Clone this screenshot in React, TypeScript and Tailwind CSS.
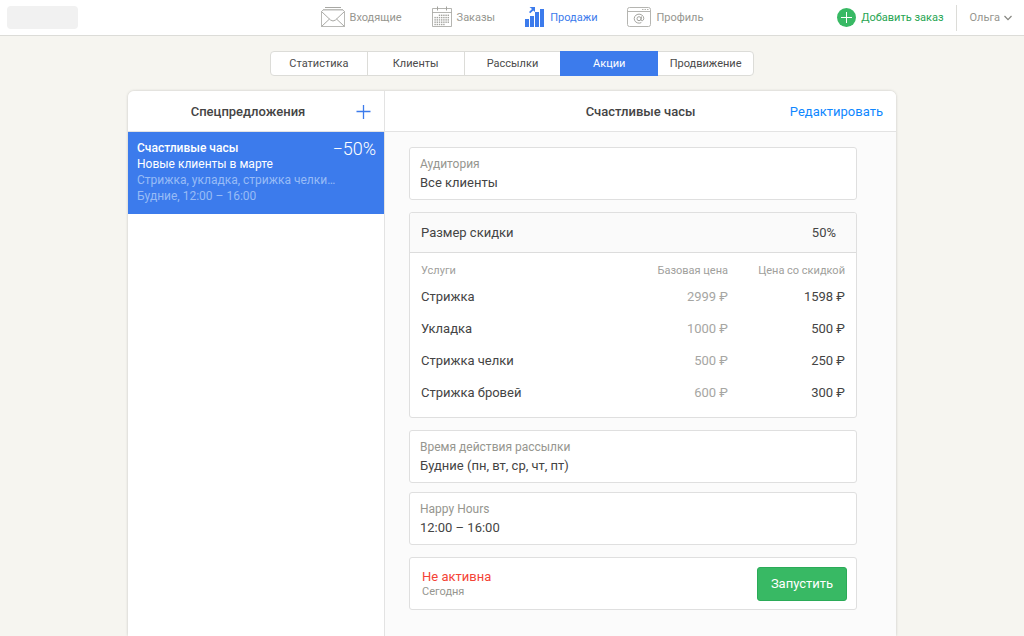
import type { ReactNode } from 'react';

function MailIcon() {
  return (
    <svg width="24" height="24" viewBox="0 0 24 24" fill="none" stroke="#a8a8a4" strokeWidth="1" aria-hidden="true">
      <path d="M4 1.500h16" />
      <path d="M2 3.500h20" strokeOpacity=".6" />
      <path d="M.5 5.500 2 4h20l1.500 1.500v15H.5z" strokeOpacity=".8" />
      <path d="M.5 5.500 9.500 14q2.500 2 5 0l9-8.500M.5 20.500 8.500 13M23.500 20.500 15.500 13" />
    </svg>
  );
}

function CalendarIcon() {
  const dots: ReactNode[] = [];
  for (let row = 0; row < 5; row++) {
    for (let col = 0; col < 7; col++) {
      if (row === 0 && col < 2) continue;
      if (row === 4 && col > 4) continue;
      dots.push(<rect key={`${row}-${col}`} x={2.4 + col * 2.2} y={8.6 + row * 2.3} width="1.4" height="1.4" />);
    }
  }
  return (
    <svg width="20" height="24" viewBox="0 0 20 24" aria-hidden="true">
      <g fill="none" stroke="#a3a39e">
        <path d="M.5 2.500h19v18H.5zM.5 6.500h19" strokeOpacity=".8" />
        <path d="M5.500 .5v4M14.500 .5v4" />
      </g>
      <g fill="#a3a39e">{dots}</g>
    </svg>
  );
}

function SalesIcon() {
  return (
    <svg width="20" height="24" viewBox="0 0 20 24" fill="#3c7bec" aria-hidden="true">
      <path d="M0 13h4v8H0zM5 10h4v11H5zM10 6h4v15h-4zM15 3h4v18h-4z" />
      <path d="M4.500 1H10v5L8.300 4.500 5.200 7.300 4 6 7 3z" />
    </svg>
  );
}

function ProfileIcon() {
  return (
    <svg width="24" height="24" viewBox="0 0 24 24" fill="none" stroke="#b5b5b1" aria-hidden="true">
      <rect x=".5" y="1.500" width="23" height="19" rx="2" />
      <path d="M.5 5.500h23" />
      <path d="M15 3.500h1.500M17.500 3.500H19M20 3.500h1.500" />
      <g stroke="#a3a39e">
        <circle cx="12" cy="12.700" r="2" />
        <path d="M14.500 10.500 14 13.500q0 1.500 1.200 1.300 1.600-.4 1.600-2.600a4.800 4.500 0 1 0-2.500 4.400" />
      </g>
    </svg>
  );
}

const navItems = [
  { label: 'Входящие', icon: <MailIcon />, active: false },
  { label: 'Заказы', icon: <CalendarIcon />, active: false },
  { label: 'Продажи', icon: <SalesIcon />, active: true },
  { label: 'Профиль', icon: <ProfileIcon />, active: false },
];

const tabs = ['Статистика', 'Клиенты', 'Рассылки', 'Акции', 'Продвижение'];

const services = [
  { name: 'Стрижка', base: '2999 ₽', discounted: '1598 ₽' },
  { name: 'Укладка', base: '1000 ₽', discounted: '500 ₽' },
  { name: 'Стрижка челки', base: '500 ₽', discounted: '250 ₽' },
  { name: 'Стрижка бровей', base: '600 ₽', discounted: '300 ₽' },
];

function Header() {
  return (
    <header className="grid h-9 grid-cols-[1fr_auto_1fr] items-center border-b border-[#dcdcd8] bg-white">
      <div className="ml-[7px] h-[23px] w-[71px] rounded bg-[#f1f1f1]" />
      <nav className="flex items-center gap-[30px] text-[11px]">
        {navItems.map((item) => (
          <a
            key={item.label}
            href="#"
            className={`flex items-center gap-[5px] ${item.active ? 'text-[#3c7bec]' : 'text-[#96968f]'}`}
          >
            {item.icon}
            <span className="pt-0.5">{item.label}</span>
          </a>
        ))}
      </nav>
      <div className="flex items-center justify-end pr-3 text-[11px]">
        <button type="button" className="flex items-center gap-[5px] text-[#27a552]">
          <svg width="19" height="19" viewBox="0 0 19 19" aria-hidden="true">
            <circle cx="9.500" cy="9.500" r="9.500" fill="#38b964" />
            <path d="M9.500 4v11M4 9.500h11" stroke="#fff" strokeWidth="1" />
          </svg>
          <span className="pt-0.5">Добавить заказ</span>
        </button>
        <span className="mr-3 ml-[13px] h-[26px] w-px bg-[#dcdcd8]" />
        <button type="button" className="flex items-center gap-1 text-[#96968f]">
          <span className="pt-0.5">Ольга</span>
          <svg width="8" height="6" viewBox="0 0 8 6" fill="none" stroke="#85857f" strokeWidth="1.2" aria-hidden="true">
            <path d="M.5 1 4 4.700 7.500 1" />
          </svg>
        </button>
      </div>
    </header>
  );
}

function Tabs() {
  return (
    <div className="mx-auto mt-[15px] grid h-[25px] w-full max-w-[484px] grid-cols-5 text-[11px] text-[#4b4b4b]">
      {tabs.map((tab) => (
        <button
          key={tab}
          type="button"
          className={`-mr-px border pt-0.5 first:rounded-l last:mr-0 last:rounded-r ${
            tab === 'Акции' ? 'z-1 border-[#3c7bec] bg-[#3c7bec] text-white' : 'border-[#dcdcd8] bg-white'
          }`}
        >
          {tab}
        </button>
      ))}
    </div>
  );
}

function InfoCard({ label, value }: { label: string; value: string }) {
  return (
    <div className="rounded-[3px] border border-[#dfdfdf] bg-white px-2.5 pt-[7px] pb-2">
      <div className="text-[12px] leading-[19px] text-[#96968f]">{label}</div>
      <div className="text-[13px] leading-[17px] text-[#444]">{value}</div>
    </div>
  );
}

function DiscountCard() {
  return (
    <section className="rounded-[3px] border border-[#dfdfdf] bg-white pb-2">
      <div className="flex h-10 items-center justify-between rounded-t-[3px] border-b border-[#dcdcdc] bg-[#fafafa] pr-5 pl-[11px] text-[13px] text-[#444]">
        <h3>Размер скидки</h3>
        <span>50%</span>
      </div>
      <div className="px-[11px]">
        <table className="w-full text-[13px]">
          <thead>
            <tr className="h-7 text-[11px] text-[#a0a09c]">
              <th scope="col" className="pt-2 text-left font-normal">Услуги</th>
              <th scope="col" className="pt-2 text-right font-normal">Базовая цена</th>
              <th scope="col" className="w-[117px] pt-2 text-right font-normal">Цена со скидкой</th>
            </tr>
          </thead>
          <tbody>
            {services.map((service) => (
              <tr key={service.name} className="h-8 text-[#444]">
                <td>{service.name}</td>
                <td className="text-right text-[#a6a6a3]">{service.base}</td>
                <td className="text-right">{service.discounted}</td>
              </tr>
            ))}
          </tbody>
        </table>
      </div>
    </section>
  );
}

function Sidebar() {
  return (
    <aside className="w-[257px] shrink-0 border-r border-[#e3e3e3]">
      <div className="flex h-[41px] items-center border-b border-[#e3e3e3] px-[13px] pt-0.5">
        <h2 className="flex-1 text-center text-[13px] font-medium text-[#444]">Спецпредложения</h2>
        <button type="button" aria-label="Добавить спецпредложение">
          <svg width="16" height="16" viewBox="0 0 16 16" stroke="#3c7bec" strokeWidth="1.300" aria-hidden="true">
            <path d="M8.500 1v14M1.500 7.500h14" />
          </svg>
        </button>
      </div>
      <a href="#" className="flex h-[82px] justify-between bg-[#3c7bec] pt-2 pr-2 pl-[9px] text-[12px] leading-4 text-white">
        <div className="min-w-0">
          <div className="font-medium">Счастливые часы</div>
          <div>Новые клиенты в марте</div>
          <div className="text-[#98bbf6]">Стрижка, укладка, стрижка челки…</div>
          <div className="text-[#98bbf6]">Будние, 12:00 – 16:00</div>
        </div>
        <div className="-ml-6 self-start text-[18px] leading-[18px] font-light">−50%</div>
      </a>
    </aside>
  );
}

function Details() {
  return (
    <main className="min-w-0 flex-1">
      <div className="grid h-[41px] grid-cols-[1fr_auto_1fr] items-center border-b border-[#e3e3e3] bg-white px-[13px] pt-0.5">
        <h1 className="col-start-2 text-[13px] font-medium text-[#444]">Счастливые часы</h1>
        <a href="#" className="justify-self-end text-[13px] text-[#0f87ff]">
          Редактировать
        </a>
      </div>
      <div className="flex flex-col gap-3 pt-[15px] pr-[39px] pb-6 pl-6">
        <InfoCard label="Аудитория" value="Все клиенты" />
        <DiscountCard />
        <div className="flex flex-col gap-[9px]">
          <InfoCard label="Время действия рассылки" value="Будние (пн, вт, ср, чт, пт)" />
          <InfoCard label="Happy Hours" value="12:00 – 16:00" />
        </div>
        <div className="flex h-[53px] items-center justify-between rounded-[3px] border border-[#dfdfdf] bg-white pr-[9px] pl-3">
          <div>
            <div className="text-[13px] leading-4 text-[#f44336]">Не активна</div>
            <div className="text-[11px] leading-[14px] text-[#96968f]">Сегодня</div>
          </div>
          <button
            type="button"
            className="h-[34px] w-[90px] rounded-[3px] border border-[#2bab58] bg-[#38b964] text-[13px] text-white"
          >
            Запустить
          </button>
        </div>
      </div>
    </main>
  );
}

export default function App() {
  return (
    <div className="flex min-h-screen flex-col bg-[#f6f5f0] font-[Roboto,'Liberation_Sans',sans-serif]">
      <Header />
      <Tabs />
      <div className="mx-auto mt-[15px] flex w-full max-w-3xl flex-1 overflow-hidden rounded-t-md bg-[linear-gradient(to_right,#fff_257px,#fbfbfb_257px)] shadow-[0_0_3px_rgba(0,0,0,0.2)]">
        <Sidebar />
        <Details />
      </div>
    </div>
  );
}
